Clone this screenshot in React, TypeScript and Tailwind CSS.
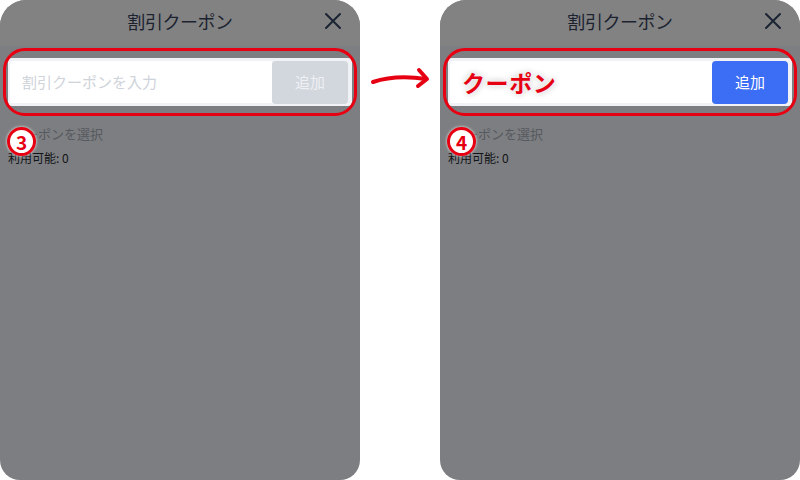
import React from 'react';

const font = { fontFamily: '"Noto Sans CJK JP", "Noto Sans", sans-serif' };

const CloseIcon = () => (
  <svg width="18" height="18" viewBox="0 0 18 18" fill="none" stroke="#1b2433" strokeWidth="2" strokeLinecap="round">
    <path d="M2 2 L16 16 M16 2 L2 16" />
  </svg>
);

const Badge: React.FC<{ n: string }> = ({ n }) => (
  <div className="absolute left-[7px] top-[127px] w-[29px] h-[29px] rounded-full bg-white border-[3px] border-[#e60012] flex items-center justify-center text-[#e60012] font-bold text-[19px] leading-none shadow-[0_0_3px_rgba(255,255,255,0.9)]">
    {n}
  </div>
);

const Panel: React.FC<{ filled?: boolean; badge: string }> = ({ filled, badge }) => (
  <div className="relative w-[360px] h-[480px] rounded-t-[26px] rounded-b-[20px] bg-[#7d7e81] overflow-hidden" style={font}>
    <div className="h-[46px] bg-[#828283] flex items-center justify-center relative">
      <span className="text-[18px] text-[#1c2230] tracking-tight -mt-[4px]">割引クーポン</span>
      <div className="absolute right-[18px] top-[12px]">
        <CloseIcon />
      </div>
    </div>
    <div className="px-[8px] pt-[12px]">
      <div className="h-[48px] bg-[#f1f2f6] rounded-[4px] flex items-center pl-[2px] pr-[4px]">
        <div className="flex-1 h-[42px] bg-white flex items-center pl-[12px]">
          {filled ? (
            <span className="text-[#e60012] font-bold text-[23px] tracking-wide [text-shadow:0_0_4px_#fff,0_0_6px_rgba(0,0,0,0.35)]">クーポン</span>
          ) : (
            <span className="text-[#cfd3da] text-[15px]">割引クーポンを入力</span>
          )}
        </div>
        <div
          className={`w-[76px] h-[43px] rounded-[4px] flex items-center justify-center text-[15px] ${
            filled ? 'bg-[#3c6df5] text-white' : 'bg-[#d2d6dd] text-[#eef0f4]'
          }`}
        >
          追加
        </div>
      </div>
      <div className="mt-[21px] pl-[4px] text-[13px] text-[#56595f] leading-none">クーポンを選択</div>
      <div className="mt-[12px] text-[12px] text-[#111318] leading-none">利用可能: 0</div>
    </div>
    <div className="absolute left-[3px] top-[48px] w-[354px] h-[68px] rounded-[22px] border-[3.5px] border-[#e60012]" />
    <Badge n={badge} />
  </div>
);

const Arrow = () => (
  <svg width="80" height="40" viewBox="0 0 80 40" fill="none" stroke="#e60012" strokeWidth="4" strokeLinecap="round" strokeLinejoin="round">
    <path d="M13 24 C28 19 46 18 66 21" />
    <path d="M59 12 L67 21 L58 28" />
  </svg>
);

export default function App() {
  return (
    <div className="w-[800px] h-[480px] bg-white flex">
      <Panel badge="3" />
      <div className="w-[80px] flex justify-center pt-[58px]">
        <div>
          <Arrow />
        </div>
      </div>
      <Panel filled badge="4" />
    </div>
  );
}
